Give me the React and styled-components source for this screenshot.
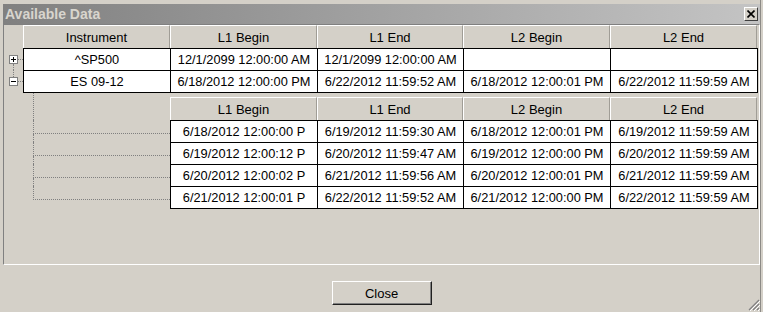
import React from "react";
import styled, { createGlobalStyle } from "styled-components";

const GlobalStyle = createGlobalStyle`
  html, body {
    margin: 0;
    padding: 0;
    background: #d4d0c8;
  }
  body {
    font-family: "Liberation Sans", Arial, sans-serif;
  }
`;

const COLS = "147px 147px 146px 147px 147px";
const SUB_COLS = "147px 146px 147px 147px";

const Window = styled.div`
  position: relative;
  width: 763px;
  height: 312px;
  box-sizing: border-box;
  padding: 4px 3px 0 3px;
  background: #d4d0c8;
  box-shadow: inset -2px 0 0 #d4d0c8, inset -3px 0 0 #8c8a86;
  display: flex;
  flex-direction: column;
`;

const TitleBar = styled.div`
  height: 20px;
  display: flex;
  align-items: center;
  justify-content: space-between;
  padding: 0 2px 0 2px;
  background: linear-gradient(to right, #808080, #c4c4c4);
`;

const Title = styled.span`
  font-size: 14px;
  font-weight: 700;
  color: #d8d5ce;
`;

const CloseX = styled.div`
  width: 14px;
  height: 14px;
  box-sizing: border-box;
  background: #d4d0c8;
  border-top: 1px solid #fff;
  border-left: 1px solid #fff;
  border-right: 1px solid #404040;
  border-bottom: 1px solid #404040;
  display: flex;
  align-items: center;
  justify-content: center;
`;

const Panel = styled.div`
  height: 241px;
  box-sizing: border-box;
  border-top: 1px solid #808080;
  border-left: 1px solid #808080;
  border-right: 1px solid #fff;
  border-bottom: 1px solid #fff;
  display: flex;
  flex-direction: column;
`;

const Row = styled.div`
  display: flex;
`;

const Gutter = styled.div`
  width: ${({ $w }) => $w || 19}px;
  flex-shrink: 0;
`;

const HeadCells = styled.div`
  display: grid;
  grid-template-columns: ${({ $cols }) => $cols};
  margin-top: ${({ $gap }) => $gap || 0}px;
`;

const HeadCell = styled.div`
  height: 23px;
  box-sizing: border-box;
  border-top: 1px solid #fff;
  border-left: 1px solid #fff;
  border-right: 1px solid #a09d96;
  display: flex;
  align-items: center;
  justify-content: center;
  font-size: 13px;
  color: #000;
`;

const Cells = styled.div`
  display: grid;
  grid-template-columns: ${({ $cols }) => $cols};
  border-right: 1px solid #000;
  border-bottom: ${({ $last }) => ($last ? "1px solid #000" : "none")};
`;

const Cell = styled.div`
  height: 22px;
  box-sizing: border-box;
  border-top: 1px solid #000;
  border-left: 1px solid #000;
  background: #fff;
  display: flex;
  align-items: center;
  justify-content: center;
  font-size: 12.8px;
  color: #000;
  white-space: nowrap;
  overflow: hidden;
`;

const ExpanderCol = styled.div`
  width: 19px;
  flex-shrink: 0;
  display: flex;
  flex-direction: column;
`;

const Stub = styled.div`
  flex: 1;
  margin-left: 9px;
  border-left: ${({ $on }) => ($on ? "1px dotted #808080" : "none")};
`;

const BoxLine = styled.div`
  display: flex;
  align-items: center;
  padding-left: 5px;
`;

const Box = styled.div`
  width: 9px;
  height: 9px;
  box-sizing: border-box;
  border: 1px solid #808080;
  background: #fff;
  display: flex;
  align-items: center;
  justify-content: center;
`;

const Tick = styled.div`
  width: 5px;
  border-top: 1px dotted #808080;
`;

const TreeCol = styled.div`
  width: 147px;
  flex-shrink: 0;
  padding-left: 10px;
  box-sizing: border-box;
  display: flex;
  flex-direction: column;
`;

const TreeHead = styled.div`
  height: 27px;
  border-left: 1px dotted #808080;
`;

const Branch = styled.div`
  height: 22px;
  display: flex;
  flex-direction: column;
`;

const BranchUpper = styled.div`
  height: 14px;
  box-sizing: border-box;
  border-left: 1px dotted #808080;
  border-bottom: 1px dotted #808080;
`;

const BranchLower = styled.div`
  flex: 1;
  border-left: ${({ $on }) => ($on ? "1px dotted #808080" : "none")};
`;

const SubTable = styled.div`
  display: flex;
  flex-direction: column;
`;

const Footer = styled.div`
  flex: 1;
  display: flex;
  justify-content: center;
  padding-top: 16px;
`;

const Button = styled.button`
  width: 100px;
  height: 24px;
  box-sizing: border-box;
  background: #d4d0c8;
  border-top: 1px solid #fff;
  border-left: 1px solid #fff;
  border-right: 1px solid #202020;
  border-bottom: 1px solid #202020;
  box-shadow: inset -1px -1px 0 #808080;
  font-family: "Liberation Sans", Arial, sans-serif;
  font-size: 13px;
  color: #000;
  padding: 0;
`;

const Grip = styled.svg`
  position: absolute;
  right: 3px;
  bottom: 1px;
`;

const topRows = [
  {
    open: false,
    cells: ["^SP500", "12/1/2099 12:00:00 AM", "12/1/2099 12:00:00 AM", "", ""],
  },
  {
    open: true,
    cells: [
      "ES 09-12",
      "6/18/2012 12:00:00 PM",
      "6/22/2012 11:59:52 AM",
      "6/18/2012 12:00:01 PM",
      "6/22/2012 11:59:59 AM",
    ],
  },
];

const subRows = [
  ["6/18/2012 12:00:00 P", "6/19/2012 11:59:30 AM", "6/18/2012 12:00:01 PM", "6/19/2012 11:59:59 AM"],
  ["6/19/2012 12:00:12 P", "6/20/2012 11:59:47 AM", "6/19/2012 12:00:00 PM", "6/20/2012 11:59:59 AM"],
  ["6/20/2012 12:00:02 P", "6/21/2012 11:59:56 AM", "6/20/2012 12:00:01 PM", "6/21/2012 11:59:59 AM"],
  ["6/21/2012 12:00:01 P", "6/22/2012 11:59:52 AM", "6/21/2012 12:00:00 PM", "6/22/2012 11:59:59 AM"],
];

const Expander = ({ open, up, down }) => (
  <ExpanderCol>
    <Stub $on={up} />
    <BoxLine>
      <Box>
        <svg width="7" height="7" viewBox="0 0 7 7">
          <rect x="1" y="3" width="5" height="1" fill="#000" />
          {!open && <rect x="3" y="1" width="1" height="5" fill="#000" />}
        </svg>
      </Box>
      <Tick />
    </BoxLine>
    <Stub $on={down} />
  </ExpanderCol>
);

const App = () => {
  return (
    <Window>
      <GlobalStyle />
      <TitleBar>
        <Title>Available Data</Title>
        <CloseX>
          <svg width="8" height="8" viewBox="0 0 8 8">
            <path d="M0.5 0.5 L7.5 7.5 M7.5 0.5 L0.5 7.5" stroke="#000" strokeWidth="1.6" />
          </svg>
        </CloseX>
      </TitleBar>
      <Panel>
        <Row>
          <Gutter />
          <HeadCells $cols={COLS}>
            {["Instrument", "L1 Begin", "L1 End", "L2 Begin", "L2 End"].map((h) => (
              <HeadCell key={h}>{h}</HeadCell>
            ))}
          </HeadCells>
        </Row>
        {topRows.map((r, i) => (
          <Row key={i}>
            <Expander open={r.open} up={i > 0} down={i < topRows.length - 1} />
            <Cells $cols={COLS} $last={i === topRows.length - 1}>
              {r.cells.map((c, j) => (
                <Cell key={j}>{c}</Cell>
              ))}
            </Cells>
          </Row>
        ))}
        <Row>
          <Gutter />
          <TreeCol>
            <TreeHead />
            {subRows.map((_, i) => (
              <Branch key={i}>
                <BranchUpper />
                <BranchLower $on={i < subRows.length - 1} />
              </Branch>
            ))}
          </TreeCol>
          <SubTable>
            <HeadCells $cols={SUB_COLS} $gap={4}>
              {["L1 Begin", "L1 End", "L2 Begin", "L2 End"].map((h) => (
                <HeadCell key={h}>{h}</HeadCell>
              ))}
            </HeadCells>
            {subRows.map((r, i) => (
              <Cells key={i} $cols={SUB_COLS} $last={i === subRows.length - 1}>
                {r.map((c, j) => (
                  <Cell key={j}>{c}</Cell>
                ))}
              </Cells>
            ))}
          </SubTable>
        </Row>
      </Panel>
      <Footer>
        <Button>Close</Button>
      </Footer>
      <Grip width="12" height="12" viewBox="0 0 12 12">
        <path d="M11 1 L1 11 M11 5 L5 11 M11 9 L9 11" stroke="#808080" strokeWidth="1.2" />
        <path d="M12 2 L2 12 M12 6 L6 12 M12 10 L10 12" stroke="#fff" strokeWidth="1" />
      </Grip>
    </Window>
  );
};

export default App;
